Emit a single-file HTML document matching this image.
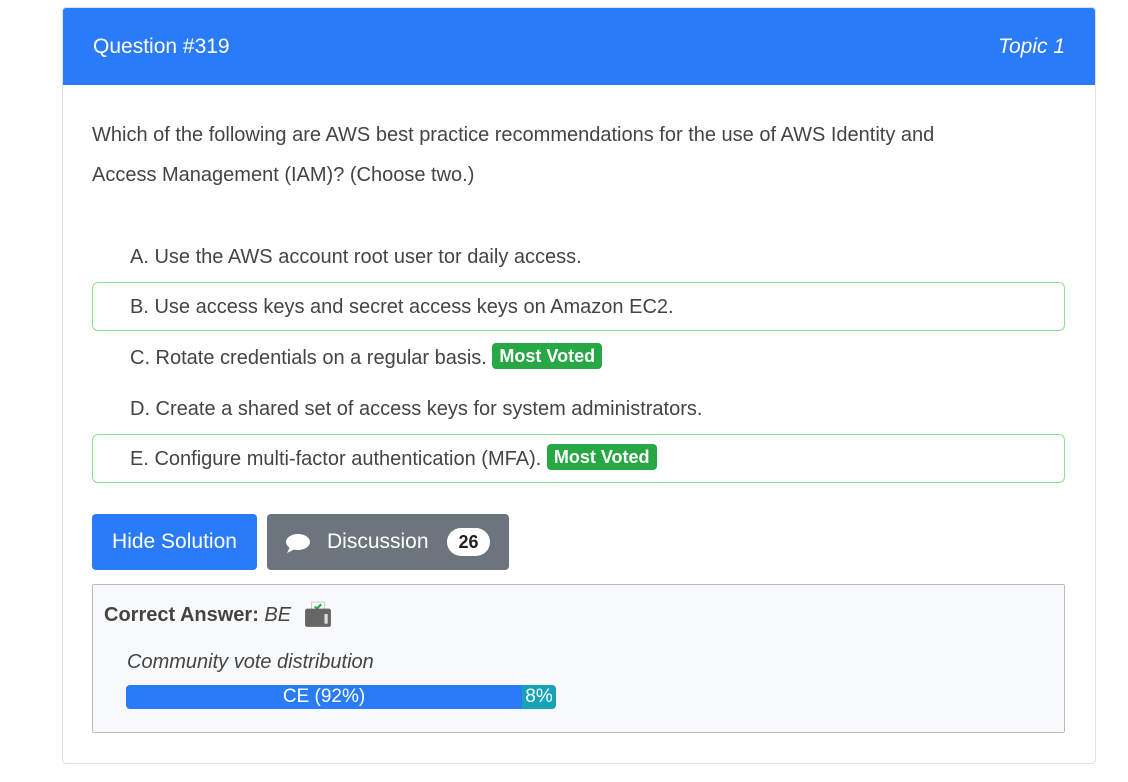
<!DOCTYPE html>
<html><head><style>
*{box-sizing:border-box;margin:0;padding:0}
body{width:1128px;height:782px;background:#fff;font-family:"Liberation Sans",sans-serif;color:#444;position:relative;overflow:hidden}
.card{position:absolute;left:62px;top:7px;width:1034px;height:757px;border:1px solid #dde2e6;border-radius:4px;overflow:hidden}
.hdr{height:77px;background:#2a7bf8;color:#fff;font-size:21px;display:flex;align-items:center;justify-content:space-between;padding:0 30px}
.hdr i{font-style:italic}
.q{position:absolute;left:29px;top:107px;width:910px;font-size:20px;line-height:40px}
.opt{position:absolute;left:29px;width:973px;height:49px;font-size:20px;line-height:49px;padding-left:37px;border:1px solid transparent;border-radius:6px}
.opt.c{border-color:#8fe08f}
.mv{display:inline-block;background:#28a745;color:#fff;font-weight:bold;font-size:18px;line-height:26px;padding:0 7px;border-radius:4px;vertical-align:2px}
.btn{position:absolute;top:506px;height:56px;border-radius:4px;color:#fff;font-size:21px;line-height:56px}
.ans{position:absolute;left:29px;top:576px;width:973px;height:149px;background:#f8f9fa;border:1px solid #bbb;border-radius:2px}
</style></head><body>
<div class="card">
<div class="hdr"><span>Question #319</span><i>Topic 1</i></div>
<div class="q">Which of the following are AWS best practice recommendations for the use of AWS Identity and Access Management (IAM)? (Choose two.)</div>
<div class="opt" style="top:224px">A. Use the AWS account root user tor daily access.</div>
<div class="opt c" style="top:274px">B. Use access keys and secret access keys on Amazon EC2.</div>
<div class="opt" style="top:325px">C. Rotate credentials on a regular basis. <span class="mv">Most Voted</span></div>
<div class="opt" style="top:376px">D. Create a shared set of access keys for system administrators.</div>
<div class="opt c" style="top:426px">E. Configure multi-factor authentication (MFA). <span class="mv">Most Voted</span></div>
<div class="btn" style="left:29px;width:165px;background:#2a7bf8;text-align:center">Hide Solution</div>
<div class="btn" style="left:204px;width:242px;background:#6c757d">
<svg style="position:absolute;left:18px;top:18px" width="26" height="22" viewBox="0 0 26 22"><ellipse cx="13" cy="10" rx="12" ry="8" fill="#fff"/><path d="M5 15 L2 21 L10 17Z" fill="#fff"/></svg>
<span style="position:absolute;left:60px">Discussion</span>
<span style="position:absolute;left:180px;top:14px;width:43px;height:28px;background:#fff;color:#222;border-radius:14px;font-weight:bold;font-size:18px;line-height:28px;text-align:center">26</span>
</div>
<div class="ans">
<div style="position:absolute;left:11px;top:16px;font-size:20px;line-height:28px"><b>Correct Answer:</b> <i>BE</i></div>
<svg style="position:absolute;left:211px;top:15px" width="28" height="28" viewBox="0 0 26 26"><rect x="7" y="2" width="12" height="8" fill="#fff" stroke="#ccc"/><path d="M10 6l2 2 4-4" stroke="#28a745" stroke-width="2" fill="none"/><rect x="1" y="8" width="24" height="17" rx="2" fill="#666"/><rect x="19" y="13" width="3" height="9" fill="#ddd"/></svg>
<div style="position:absolute;left:34px;top:66px;font-size:20px;font-style:italic">Community vote distribution</div>
<div style="position:absolute;left:33px;top:100px;width:430px;height:24px;border-radius:4px;overflow:hidden;display:flex;color:#fff;font-size:19px;line-height:24px;text-align:center">
<div style="width:396px;background:#2a7bf8">CE (92%)</div><div style="flex:1;background:#17a2b8">8%</div></div>
</div>
</div>
</body></html>
